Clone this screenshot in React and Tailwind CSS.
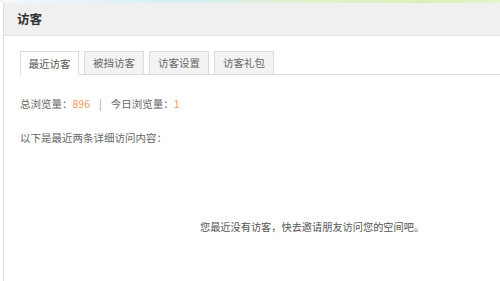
export default function App() {
  const font = { fontFamily: '"Noto Sans CJK SC", "Noto Sans", sans-serif' };
  const tabs = ["最近访客", "被挡访客", "访客设置", "访客礼包"];
  return (
    <div className="w-[500px] h-[281px] bg-white overflow-hidden flex flex-col" style={font}>
      <div className="h-[3px] shrink-0 bg-[linear-gradient(90deg,#f4f8fa_0%,#d6eef7_35%,#e2f1d0_60%,#dcefb8_85%,#e6f3cc_100%)]" />
      <div className="flex-1 ml-[3px] border-l border-[#dcdcdc] flex flex-col">
        <div className="h-[33px] shrink-0 bg-[#f0f0f0] border-b border-[#e6e6e6] pl-[13px] flex items-center text-[12.5px] font-bold text-[#333]">
          访客
        </div>
        <div className="pl-[16px] pt-[16px] flex flex-col text-[10.5px] text-[#666]">
          <div className="flex gap-[5px] h-[23px] border-b border-[#dcdcdc] items-end">
            {tabs.map((t, i) => (
              <div
                key={t}
                className={
                  i === 0
                    ? "w-[59px] h-[24px] -mb-px bg-white border border-b-0 border-[#dcdcdc] flex items-center justify-center text-[#555]"
                    : "w-[60px] h-[23px] bg-[#f3f3f3] border border-b-0 border-[#dcdcdc] flex items-center justify-center text-[#666]"
                }
              >
                {t}
              </div>
            ))}
          </div>
          <div className="mt-[22px] h-[14px] flex items-center">
            <span>总浏览量：</span>
            <span className="text-[#f29a5a]">896</span>
            <span className="mx-[9px] text-[#999]">|</span>
            <span>今日浏览量：</span>
            <span className="text-[#f29a5a]">1</span>
          </div>
          <div className="mt-[20px] h-[14px] flex items-center">以下是最近两条详细访问内容：</div>
          <div className="mt-[75px] h-[14px] flex items-center pl-[180px] text-[10.2px] text-[#555]">
            您最近没有访客，快去邀请朋友访问您的空间吧。
          </div>
        </div>
      </div>
    </div>
  );
}
